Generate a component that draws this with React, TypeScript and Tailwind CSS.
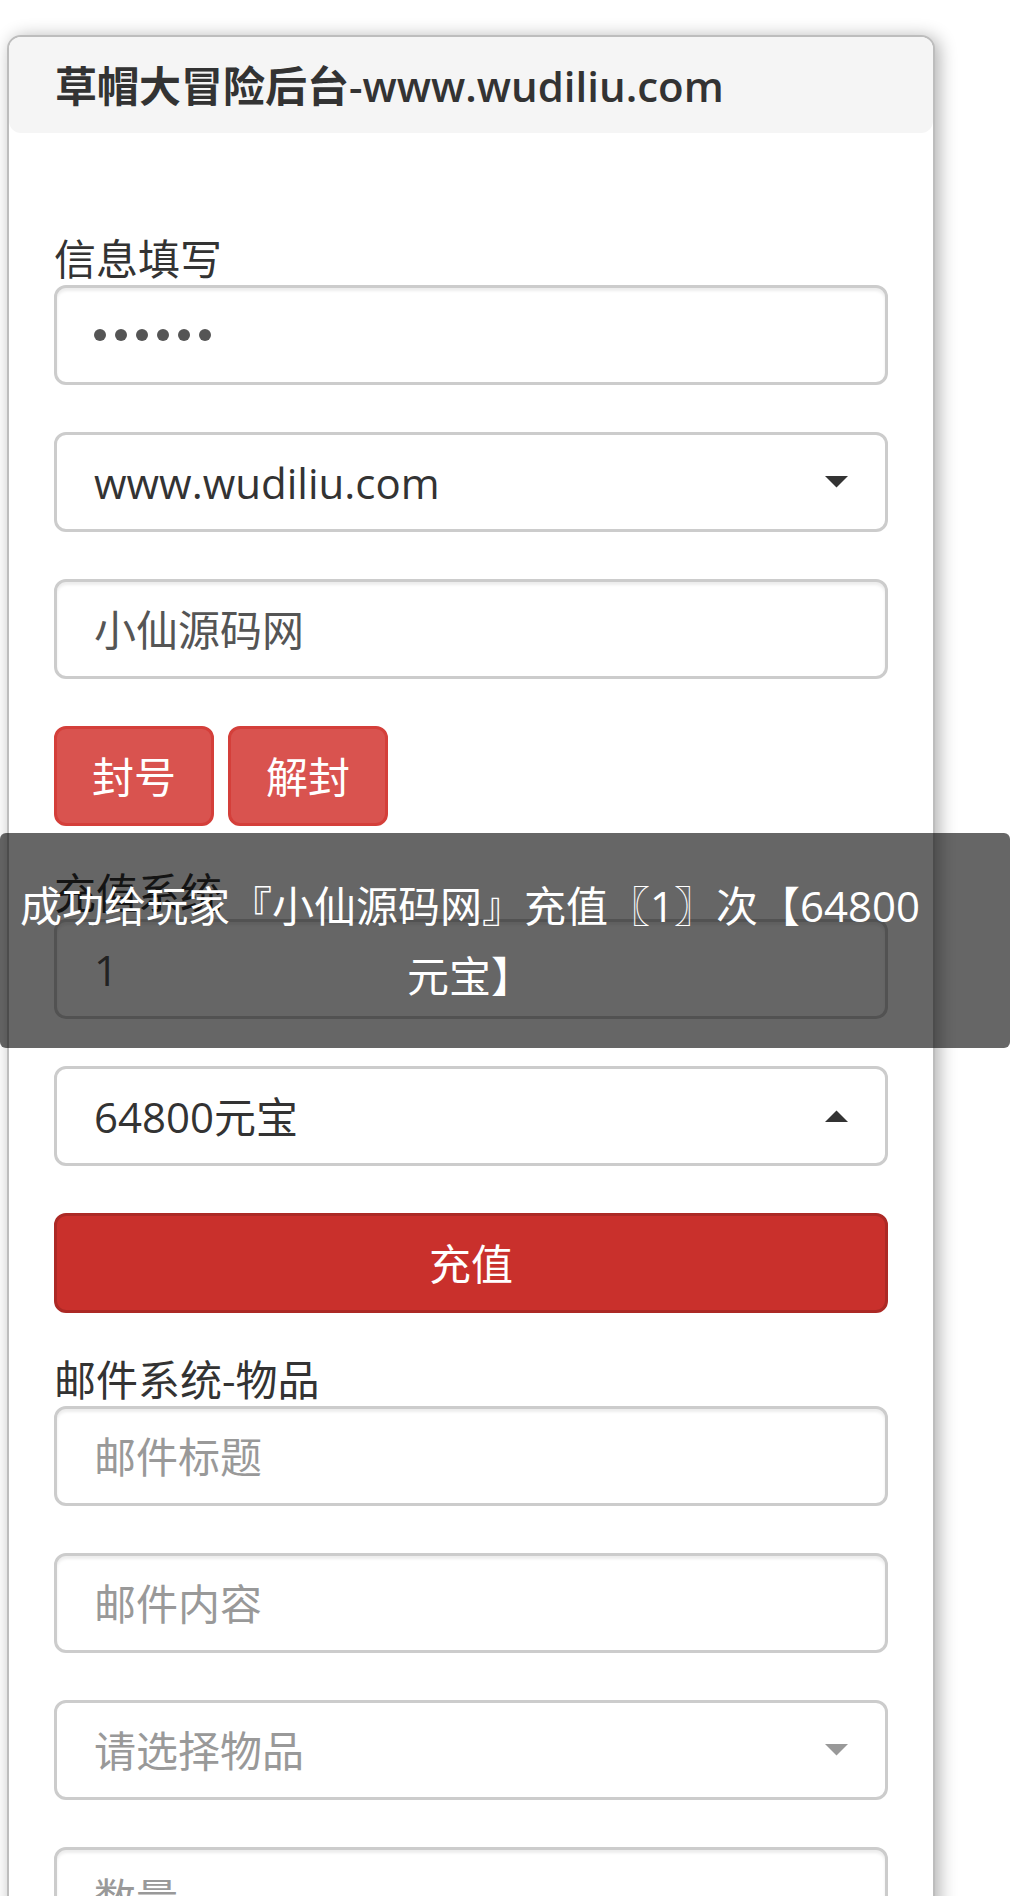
import React from 'react';

function Field({ children, placeholder, mb = 'mb-[47px]' }: { children?: React.ReactNode; placeholder?: boolean; mb?: string }) {
  return (
    <div
      className={`h-[100px] ${mb} flex items-center pl-[37px] pr-[36px] border-[3px] border-[#ccc] rounded-[12px] bg-white shadow-[inset_0_3px_3px_rgba(0,0,0,0.075)] text-[42px] ${
        placeholder ? 'text-[#999]' : 'text-[#555]'
      }`}
    >
      {children}
    </div>
  );
}

function Select({ value, up, placeholder }: { value: string; up?: boolean; placeholder?: boolean }) {
  return (
    <div
      className={`h-[100px] mb-[47px] flex items-center justify-between pl-[37px] pr-[37px] border-[3px] border-[#ccc] rounded-[12px] bg-white text-[42px] ${
        placeholder ? 'text-[#999]' : 'text-[#333]'
      }`}
    >
      <span>{value}</span>
      <svg width="23" height="12" viewBox="0 0 23 12" className={up ? 'rotate-180' : ''}>
        <path d="M0 0 L23 0 L11.5 11.5 Z" fill={placeholder ? '#999' : '#333'} />
      </svg>
    </div>
  );
}

function Label({ children }: { children: React.ReactNode }) {
  return <div className="h-[46px] mb-[3px] leading-[46px] text-[42px] text-[#333]">{children}</div>;
}

export default function App() {
  return (
    <div className="relative h-[1896px] overflow-hidden bg-white font-['Open_Sans','Noto_Sans_CJK_SC',sans-serif]">
      <div className="ml-[7px] mt-[35px] w-[928px] border-[2px] border-[#bdbdbd] rounded-[14px] bg-white shadow-[4px_2px_18px_rgba(0,0,0,0.32)]">
        <div className="h-[96px] flex items-center pl-[46px] bg-[#f5f5f5] rounded-[12px]">
          <h3 className="text-[42px] font-semibold text-[#333]">草帽大冒险后台-www.wudiliu.com</h3>
        </div>

        <div className="px-[45px] pt-[103px]">
          <Label>信息填写</Label>
          <Field>
            <div className="flex gap-[9px]">
              {[0, 1, 2, 3, 4, 5].map((i) => (
                <span key={i} className="w-[12px] h-[12px] rounded-full bg-[#555]" />
              ))}
            </div>
          </Field>
          <Select value="www.wudiliu.com" />
          <Field>小仙源码网</Field>
          <div className="flex gap-[14px] mb-[44px]">
            <button className="w-[160px] h-[100px] rounded-[12px] bg-[#d9534f] border-[3px] border-[#d43f3a] text-white text-[42px]">
              封号
            </button>
            <button className="w-[160px] h-[100px] rounded-[12px] bg-[#d9534f] border-[3px] border-[#d43f3a] text-white text-[42px]">
              解封
            </button>
          </div>

          <Label>充值系统</Label>
          <Field>1</Field>
          <Select value="64800元宝" up />
          <button className="w-full h-[100px] mb-[44px] rounded-[12px] bg-[#c9302c] border-[3px] border-[#ac2925] text-white text-[42px]">
            充值
          </button>

          <Label>邮件系统-物品</Label>
          <Field placeholder>邮件标题</Field>
          <Field placeholder>邮件内容</Field>
          <Select value="请选择物品" placeholder />
          <Field placeholder>数量</Field>
          <Field placeholder>&nbsp;</Field>
        </div>
      </div>

      <div className="absolute left-0 top-[833px] w-[1010px] h-[215px] rounded-[6px] bg-black/60 flex flex-col items-center justify-center pl-[20px] pr-[90px] text-white text-[42px] leading-[70px]">
        <p className="whitespace-nowrap">成功给玩家『小仙源码网』充值〖1〗次【64800</p>
        <p className="whitespace-nowrap">元宝】</p>
      </div>
    </div>
  );
}
